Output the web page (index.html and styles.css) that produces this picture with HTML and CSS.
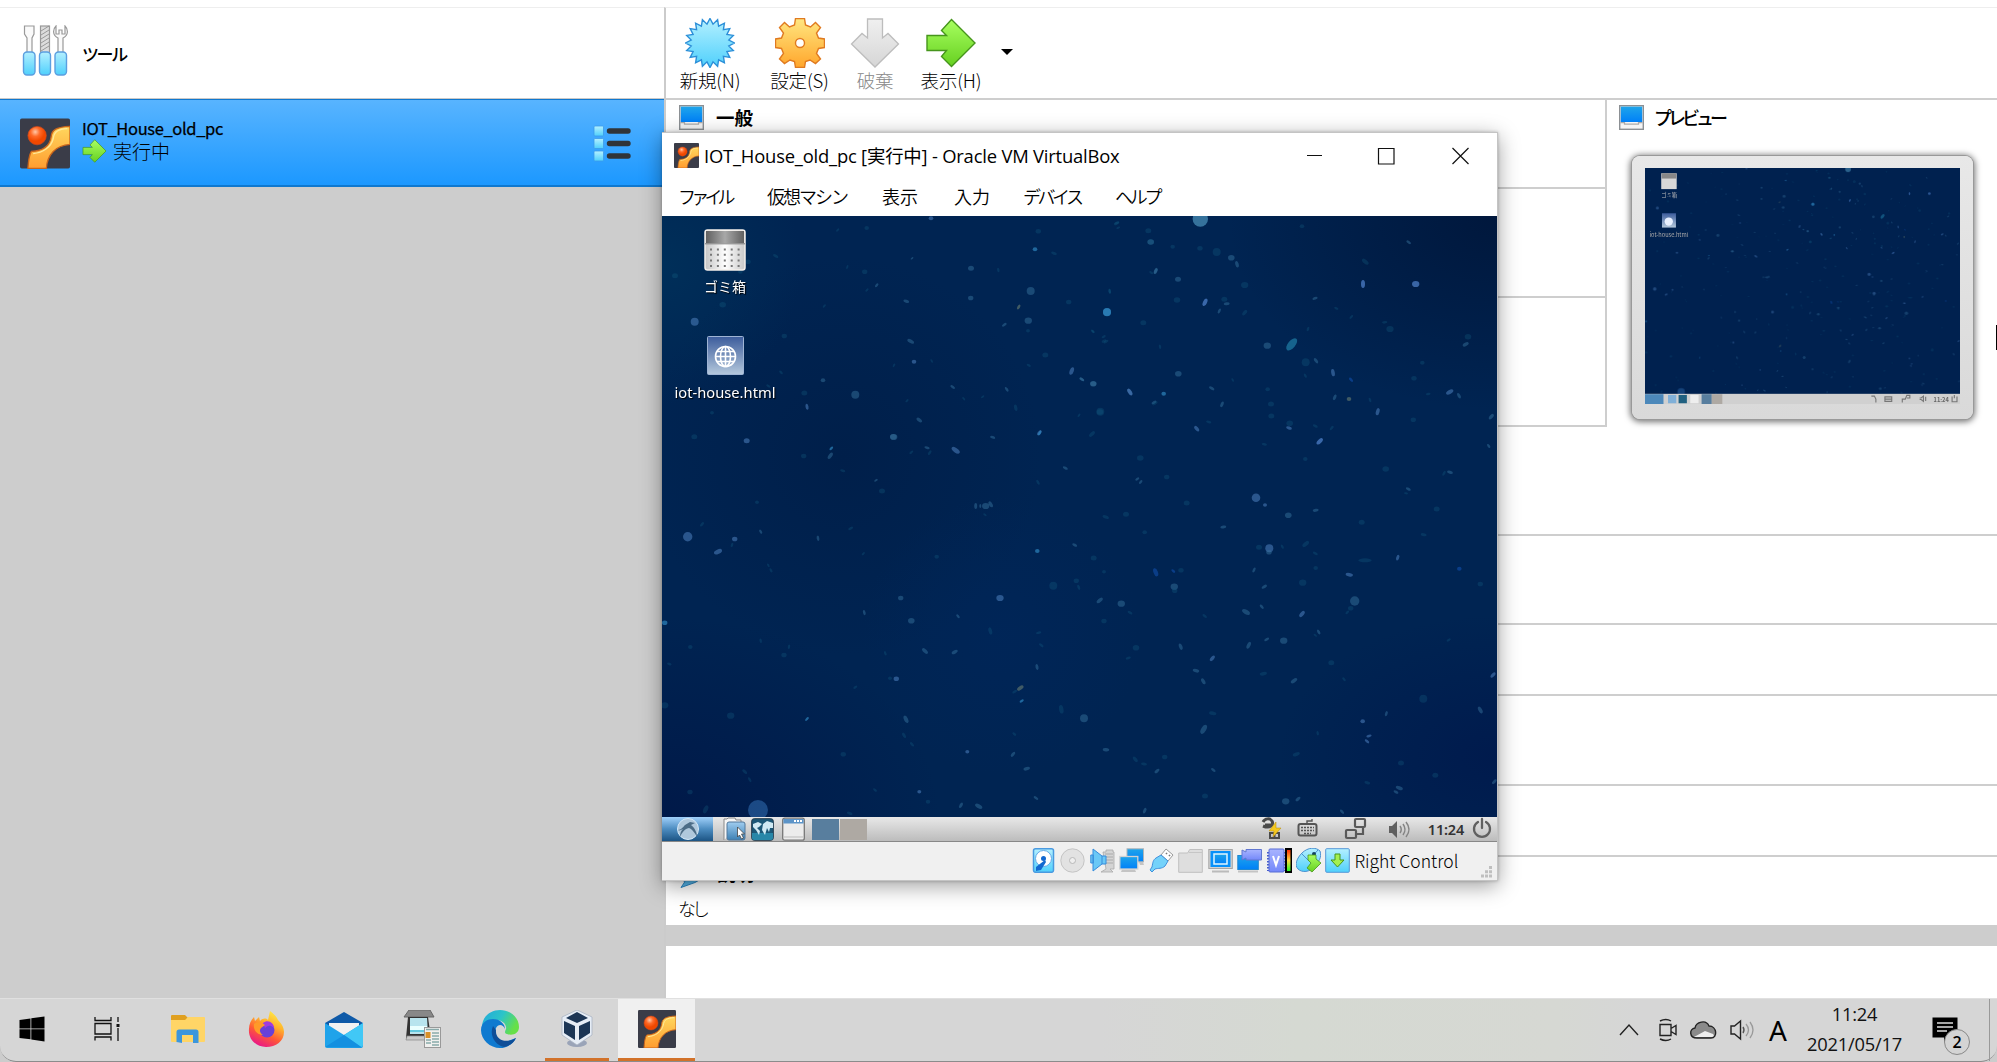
FILE: index.html
```html
<!DOCTYPE html>
<html lang="ja">
<head>
<meta charset="utf-8">
<title>Oracle VM VirtualBox</title>
<link rel="stylesheet" href="styles.css">
</head>
<body>
<svg class="defs" width="0" height="0" aria-hidden="true">
  <defs>
    <linearGradient id="gCyan" x2="0" y2="1"><stop offset="0" stop-color="#b4f0ff"/><stop offset="1" stop-color="#4fd0fc"/></linearGradient>
    <linearGradient id="gScreen" x2="0" y2="1"><stop offset="0" stop-color="#1fa5ea"/><stop offset="1" stop-color="#0080f8"/></linearGradient>
    <linearGradient id="gGreen" x2="0" y2="1"><stop offset="0" stop-color="#a8ff60"/><stop offset="1" stop-color="#66d020"/></linearGradient>
    <linearGradient id="gOrange" x2="0" y2="1"><stop offset="0" stop-color="#ffe680"/><stop offset="1" stop-color="#ffa62c"/></linearGradient>
    <linearGradient id="gGray" x2="0" y2="1"><stop offset="0" stop-color="#f0f0f0"/><stop offset="1" stop-color="#d6d6d6"/></linearGradient>
    <linearGradient id="gViolet" x2="0" y2="1"><stop offset="0" stop-color="#a8b4ff"/><stop offset="1" stop-color="#7488fa"/></linearGradient>
    <linearGradient id="gHouse" x2="0" y2="1"><stop offset="0" stop-color="#ffd75e"/><stop offset="1" stop-color="#ff9d30"/></linearGradient>
    <radialGradient id="gBall" cx=".4" cy=".3"><stop offset="0" stop-color="#ffc8a8"/><stop offset=".5" stop-color="#ff6a28"/><stop offset="1" stop-color="#f04800"/></radialGradient>
    <linearGradient id="gTrash"><stop offset="0" stop-color="#c4c4c4"/><stop offset=".5" stop-color="#fff"/><stop offset="1" stop-color="#c8c8c8"/></linearGradient>
    <linearGradient id="gLid"><stop offset="0" stop-color="#606060"/><stop offset=".5" stop-color="#a8a8a8"/><stop offset="1" stop-color="#606060"/></linearGradient>
    <linearGradient id="gPage" x2="0" y2="1"><stop offset="0" stop-color="#3c5c9c"/><stop offset="1" stop-color="#b4c8dc"/></linearGradient>
    <linearGradient id="gBlue" x2="0" y2="1"><stop offset="0" stop-color="#a0cdf0"/><stop offset="1" stop-color="#3c80b4"/></linearGradient>
    <linearGradient id="gFire" x1=".8" x2=".3" y2="1"><stop offset="0" stop-color="#fff14a"/><stop offset=".35" stop-color="#ffb42c"/><stop offset=".65" stop-color="#ff5a35"/><stop offset="1" stop-color="#e8148c"/></linearGradient>
    <linearGradient id="gEdge" x2="1" y2=".4"><stop offset="0" stop-color="#22a8dc"/><stop offset=".55" stop-color="#2cc4c8"/><stop offset="1" stop-color="#66e048"/></linearGradient>
    <linearGradient id="gMeter" x2="0" y2="1"><stop offset="0" stop-color="#ff2000"/><stop offset=".5" stop-color="#ffd840"/><stop offset="1" stop-color="#10ff20"/></linearGradient>
  </defs>
  <symbol id="house" viewBox="0 0 114 114">
    <rect width="114" height="114" rx="4" fill="#3a3c48"/>
    <circle cx="39" cy="39" r="21" fill="url(#gBall)" stroke="#d84818" stroke-width="1.5"/>
    <path d="M114 18C84 19 72 26 71 42C68 62 52 74 26 75C20 84 19 100 18 114H60C62 82 82 61 114 59Z" fill="url(#gHouse)" stroke="#c8641c" stroke-width="3"/>
    <path d="M108 23C88 24 78 29 76 45C71 66 52 78 30 80" fill="none" stroke="#ffe99a" stroke-width="3"/>
  </symbol>
  <symbol id="monitor" viewBox="0 0 25 25">
    <rect x=".7" y=".7" width="23.6" height="23.6" fill="#f4f4f4" stroke="#8c9094" stroke-width="1.4"/>
    <rect x="1.8" y="1.6" width="21.4" height="15.4" fill="url(#gScreen)"/>
    <path d="M1.5 17.6h4v1.6h14v-1.6h4" fill="none" stroke="#aaa" stroke-width="1.2"/>
  </symbol>
  <symbol id="arrow" viewBox="0 0 50 50">
    <path d="M1 17.5H20.500L15.500 12.500L25.500 1.500L49 25L25.500 48.500L15.500 38.500L20.500 32.500H1Z" fill="url(#gGreen)" stroke="#46951c" stroke-width="1.4"/>
  </symbol>
</svg>

<div class="manager">
  <aside class="side">
    <div class="tools">
      <svg class="tools-icon" viewBox="0 0 47 52">
        <g fill="#fafafa" stroke="#999" stroke-width="1.2">
          <path d="M2.500 1h9.500v8l-2 4v15H5V13L2.500 9Z"/><rect x="18.500" y="1" width="9" height="27" fill="#ddd"/>
          <path d="M34 1c-3 3-4 9 2 12v15h5V13c6-3 5-9 2-12v8h-3V5h-3v4h-3Z"/>
        </g>
        <path d="M19 6l8-5M19 10l8-5M19 14l8-5M19 18l8-5M19 22l8-5M19 26l8-5" stroke="#888" stroke-width=".8"/>
        <g fill="url(#gCyan)" stroke="#5b9fe0" stroke-width="1.4"><rect x="1.500" y="27" width="11.500" height="23" rx="3.500"/><rect x="17.500" y="27" width="11" height="23" rx="3.500"/><rect x="33" y="27" width="11.500" height="23" rx="3.500"/></g>
      </svg>
      <span class="tools-label">ツール</span>
    </div>
    <div class="machine">
      <svg class="machine-icon"><use href="#house"/></svg>
      <div class="machine-text">
        <div class="machine-name">IOT_House_old_pc</div>
        <div class="machine-state"><svg><use href="#arrow"/></svg><span>実行中</span></div>
      </div>
      <svg class="list-icon" viewBox="0 0 38 38">
        <g fill="url(#gCyan)" stroke="#3c9ae8" stroke-width=".8"><rect x="1" y="1" width="9.500" height="10" rx="1"/><rect x="1" y="13.500" width="9.500" height="10" rx="1"/><rect x="1" y="26" width="9.500" height="10" rx="1"/></g>
        <path d="M16.500 6h18.500M16.500 18.500h18.500M16.500 31h18.500" stroke="#303438" stroke-width="5.400" stroke-linecap="round"/>
      </svg>
    </div>
  </aside>

  <main class="content">
    <div class="toolbar">
      <div class="tool">
        <svg id="burst" viewBox="-25 -25 50 50"></svg><span>新規(N)</span>
      </div>
      <div class="tool">
        <svg viewBox="-25 -25 50 50"><path d="M-4.500-24.500H4.500L5.500-18L10.500-16L15.500-20.500L20.500-15.500L16.500-10L18.500-5L24.500-4V4.500L18.500 5.500L16.500 10.500L20.500 16L15.500 20.500L10 17L5.500 18.500L4.500 24.500H-4.500L-5.500 18.500L-10 17L-15.500 20.500L-20.500 16L-16.500 10.500L-18.500 5.500L-24.500 4.500V-4L-18.500-5L-16.500-10L-20.500-15.500L-15.500-20.500L-10.500-16L-5.500-18Z" fill="url(#gOrange)" stroke="#e07a20" stroke-width="1.400"/><circle r="4.500" fill="#fff" stroke="#e07a20" stroke-width="1.400"/></svg><span>設定(S)</span>
      </div>
      <div class="tool off">
        <svg viewBox="0 0 50 50"><path d="M17.500 1H32.500V20L38 15.500L48.500 26L25 49L1.500 26L12 15.500L17.500 20Z" fill="url(#gGray)" stroke="#bdbdbd" stroke-width="1.300"/></svg><span>破棄</span>
      </div>
      <div class="tool"><svg><use href="#arrow"/></svg><span>表示(H)</span></div>
      <i class="caret"></i>
    </div>
    <div class="details">
      <div class="top-row">
        <div class="sections">
          <section class="s-general"><svg class="sec-icon"><use href="#monitor"/></svg><b>一般</b></section>
          <section class="s-system"></section>
          <section class="s-display"></section>
        </div>
        <div class="preview">
          <div class="preview-head"><svg class="sec-icon"><use href="#monitor"/></svg><b>プレビュー</b></div>
          <div class="frame">
            <svg class="mini" viewBox="0 0 835 626" preserveAspectRatio="none">
              <rect width="835" height="601" fill="#00214f"/>
              <g class="specks"></g>
              <rect x="43" y="14" width="41" height="42" fill="#d8d8d8"/><rect x="44" y="14" width="39" height="14" fill="#888"/>
              <rect x="45" y="120" width="37" height="38" fill="url(#gPage)"/><circle cx="63" cy="142" r="11" fill="#e8f0ff"/>
              <text x="43" y="76" font-size="14" fill="#bbb">ゴミ箱</text><text x="12" y="182" font-size="15" fill="#aaa">iot-house.html</text>
              <rect y="599" width="835" height="27" fill="#d0d0d0"/><rect y="600" width="49" height="26" fill="#4c88ba"/><rect x="61" y="602" width="22" height="22" fill="#80b0d8"/><rect x="89" y="602" width="22" height="22" fill="#206080"/><rect x="120" y="602" width="22" height="22" fill="#eee"/><rect x="150" y="600" width="27" height="26" fill="#587e9e"/><rect x="177" y="600" width="28" height="26" fill="#aea9a3"/>
              <g fill="none" stroke="#777" stroke-width="3"><path d="M600 605h8l4 8v9M636 607h18v12h-18ZM636 613h18M682 622v-9h8l4-10h8v7h-8M728 610h4l6-5v14l-6-5h-4M744 607v11M814 606v14h13v-14M820 602v9"/></g><text x="765" y="620" font-size="15" font-weight="700" fill="#666">11:24</text>
            </svg>
          </div>
          <i class="edge-cursor"></i>
        </div>
      </div>
      <section class="r1"></section><section class="r2"></section><section class="r3"></section><section class="r4"></section><section class="r5"></section>
      <section class="r6">
        <div class="desc-head"><svg class="bubble" viewBox="0 0 25 25"><path d="M3 2h19v14l-5 3-14 5 4-6-4-2Z" fill="#58b8ec" stroke="#2c88c4"/></svg><b>説明</b></div>
        <p>なし</p>
      </section>
    </div>
    <div class="log"></div>
  </main>
</div>

<div class="vm">
  <header class="titlebar">
    <svg class="title-icon"><use href="#house"/></svg>
    <span class="title">IOT_House_old_pc [実行中] - Oracle VM VirtualBox</span>
    <svg class="controls" viewBox="0 0 164 18"><path d="M0 8.500h15M71.500 1.500h15.500v15.500H71.500ZM145.500 1l16 16M161.500 1l-16 16" fill="none" stroke="#111" stroke-width="1.200"/></svg>
  </header>
  <nav class="menu"><span>ファイル</span><span>仮想マシン</span><span>表示</span><span>入力</span><span>デバイス</span><span>ヘルプ</span></nav>
  <div class="desktop">
    <svg class="wall" viewBox="0 0 835 601"><g class="specks"></g></svg>
    <div class="shortcut trash">
      <svg viewBox="0 0 42 42" width="42" height="42"><rect x="1" y="1" width="40" height="40" rx="2.500" fill="url(#gTrash)" stroke="#f4f0ec" stroke-width="1.500"/><rect x="2" y="2" width="38" height="12" fill="url(#gLid)"/><path d="M1 14.800h40" stroke="#777"/><path d="M6 20.500h32M6 25.800h32M6 31.500h32M6 37h32" stroke="#777" stroke-width="2" stroke-dasharray="2 4.900"/></svg>
      <span>ゴミ箱</span>
    </div>
    <div class="shortcut page">
      <svg viewBox="0 0 37 39" width="37" height="39"><rect x=".5" y=".5" width="36" height="38" rx="1" fill="url(#gPage)" stroke="#9fb4d4"/><g fill="none" stroke="#fff" stroke-width="1.600"><circle cx="18.500" cy="20.500" r="10"/><ellipse cx="18.500" cy="20.500" rx="5" ry="10"/><path d="M18.500 10.500v20M8.500 20.500h20M10 15.500h17M10 25.500h17"/></g></svg>
      <span>iot-house.html</span>
    </div>
  </div>
  <div class="panel">
    <div class="start"><svg viewBox="0 0 24 24" width="24" height="24"><circle cx="12" cy="12" r="10.500" fill="#b0c8dc" stroke="#d4e8f8"/><path d="M2 13c3 0 5-3 7-5l5-3 5 1-4 2c4 3 6 8 6 12-2-4-5-8-8-9-5 1-7 5-9 9 0-4 1-6 3-8-2 1-4 2-5 1Z" fill="#4c6c86"/></svg></div>
    <div class="launch">
      <svg viewBox="0 0 23 24"><path d="M1 23V2h3l1-1h7l1 2h5v5" fill="#f6f6f6" stroke="#888"/><rect x="4" y="5" width="18" height="18" rx="2" fill="url(#gBlue)" stroke="#50779a"/><path d="M14.500 10v10l2-2 2 4 2-1-2-4h3Z" fill="#fff" stroke="#444" stroke-width=".8"/></svg>
      <svg viewBox="0 0 23 24"><rect x=".7" y="1.700" width="21.600" height="21.600" rx="2.500" fill="#1c5878" stroke="#20384a"/><path d="M1 16h21v5q0 2-2 2H3q-2 0-2-2Z" fill="#2887a8"/><path d="M2 7l5-2 4 2-3 3-2 1 3 3-1 4-3-5-3-3ZM12 7l4-3 6 2v5l-3 0-1 4-2-4-2 7-3-5Z" fill="#d0eaf4"/></svg>
      <svg viewBox="0 0 23 24"><rect x=".7" y="1.200" width="21.600" height="22" rx="2" fill="#ececec" stroke="#777" stroke-width="1.300"/><rect x="1.400" y="2" width="20.200" height="4.500" fill="#5c94c8"/><path d="M12 4h8" stroke="#fff" stroke-width="2" stroke-dasharray="2 1"/><path d="M2 20h19" stroke="#bbb"/></svg>
    </div>
    <div class="pager"><i></i><i></i></div>
    <svg class="tray" viewBox="0 0 236 24">
      <g fill="none" stroke="#4a4a4a" stroke-width="3"><path d="M2 9c7 3 11-1 9-5C9 1 4 1 2 5M11 8H4"/><path d="M9 16h9v5H9ZM13.500 15v6" stroke-width="2"/></g><path d="M15 5l-7 9h5l-1 6 8-9h-5Z" fill="#f4c820" stroke="#bb8c00" stroke-width=".5"/>
      <g fill="none" stroke="#555"><rect x="37.500" y="7" width="18" height="11.500" rx="2" stroke-width="2"/><path d="M40 10.500h13M40 13.500h13M43 16.500h7" stroke-width="1.700" stroke-dasharray="2 1"/><path d="M46 7V4h5V2" stroke-width="1.400"/></g>
      <g fill="none" stroke="#5a5a5a" stroke-width="2.200"><rect x="94" y="2" width="10" height="8" rx="1"/><rect x="85" y="13" width="10" height="8" rx="1"/><path d="M102 10v7h-7"/></g>
      <path d="M128 9h3l5-5v17l-5-5h-3Z" fill="#606060"/><path d="M139 9q2.500 3.500 0 7M142 7q4 5.500 0 11M145 5q6 7.500 0 15" fill="none" stroke="#858585" stroke-width="1.500"/>
      <g fill="none" stroke="#606060" stroke-width="2.300" stroke-linecap="round"><path d="M217 5a8 8 0 1 0 8 0M221 2v9"/></g>
    </svg>
    <span class="panel-clock">11:24</span>
  </div>
  <footer class="status">
    <div class="indicators">
      <svg viewBox="0 0 25 25"><rect x="2.500" y=".8" width="20" height="23.500" rx="2" fill="url(#gCyan)" stroke="#4a9ae0" stroke-width="1.500"/><circle cx="12.500" cy="10.500" r="8" fill="#fff" stroke="#65a9e8"/><circle cx="12.500" cy="10.500" r="2.500" fill="#1268d0"/><path d="M14 12l-9 7v4l5-1 5-8Z" fill="#1268d0"/></svg>
      <svg viewBox="0 0 25 25"><circle cx="12.500" cy="12.500" r="11.700" fill="#e2e2e2" stroke="#c4c4c4"/><circle cx="12.500" cy="12.500" r="3" fill="#eee" stroke="#b8b8b8"/></svg>
      <svg viewBox="0 0 25 25"><path d="M13 4h3V2h7v2h1v17h-4l3 3H11l5-3Z" fill="#d4d4d4" stroke="#aaa" stroke-width=".8"/><path d="M15 6h8M15 9h8M15 12h8M15 15h8" stroke="#aaa"/><path d="M.8 7h2.500v8H.8ZM3 1l9 7h4v8h-4l-9 7Z" fill="#6ac8f6" stroke="#368cdc"/><path d="M12 8v8" stroke="#368cdc"/></svg>
      <svg viewBox="0 0 25 25"><rect x="8" y=".8" width="16.500" height="13" fill="url(#gScreen)" stroke="#aeb4b8"/><path d="M21 17h4l-1-3h-4ZM2 24h15l-1-2.500H3Z" fill="#c4c4c4"/><rect x=".8" y="8.500" width="18" height="12.500" fill="url(#gScreen)" stroke="#d2d2d2" stroke-width="1.300"/></svg>
      <svg viewBox="0 0 25 25"><path d="M17 1l7 6-5 6-7-6Z" fill="#fff" stroke="#999"/><path d="M17 5l1 1M20 7l1 1" stroke="#777" stroke-width="1.700"/><path d="M12 7l7 6-3 5c-3 3-7 2-10 3l-3 3-2-2 2-3c1-5 1-7 4-9Z" fill="#74d2fa" stroke="#4090dc"/></svg>
      <svg viewBox="0 0 25 25"><path d="M.7 5h9l2-3.500h12.600v22.800H.7Z" fill="#dedede" stroke="#c0c0c0"/><path d="M11 4.500h13" stroke="#c6c6c6"/></svg>
      <svg viewBox="0 0 25 25"><rect x=".8" y="1.500" width="23.500" height="19" fill="#d2d2d2" stroke="#a6a6a6"/><rect x="2.500" y="3" width="20" height="16" fill="#0891fa"/><rect x="6" y="6" width="13" height="10" fill="url(#gScreen)" stroke="#dff6ff" stroke-width="1.500"/><path d="M4 24.500h17v-2H4Z" fill="#bbb"/></svg>
      <svg viewBox="0 0 25 25"><rect x=".8" y="7.500" width="20.500" height="14" fill="url(#gScreen)" stroke="#2088d0"/><path d="M1 24.500h20v-2H1Z" fill="#c4c4c4"/><path d="M9 1.500h15.500v10.500H9V10l-4 2V2l4 2Z" fill="url(#gViolet)" stroke="#6076d0"/></svg>
      <svg viewBox="0 0 25 25"><path d="M1 4v19M17.500 4v19" stroke="#445acc" stroke-width="2" stroke-dasharray="1.500 1.500"/><rect x="2" y="1" width="15" height="23" rx="1" fill="url(#gViolet)" stroke="#586cd4"/><path d="M6 8l3 9 3-9" fill="none" stroke="#fff" stroke-width="2"/><rect x="19" y="1" width="5.500" height="23" fill="url(#gMeter)" stroke="#000" stroke-width="2"/></svg>
      <svg viewBox="0 0 25 25"><path d="M6 5C12-1 20-1 24 3c2 6-1 11-6 16-4 5-12 6-16 2S1 10 6 5Z" fill="url(#gCyan)" stroke="#4a90d0"/><path d="M5 5l8 8M12 13L22 2" stroke="#4a90d0" fill="none"/><circle cx="18" cy="6" r="2" fill="#104060"/><path d="M12 7h8v4l5 4-9 9-5-4 4-5-3-3Z" fill="url(#gGreen)" stroke="#46951c" stroke-width=".8"/></svg>
      <svg viewBox="0 0 25 25"><rect x=".7" y=".7" width="23.600" height="23.600" rx="1" fill="url(#gCyan)" stroke="#5698d8"/><path d="M10 6h5v6h4l-6.500 7L6 12h4Z" fill="#a4f050" stroke="#46951c"/></svg>
    </div>
    <span class="host-key">Right Control</span>
    <svg class="grip" viewBox="0 0 12 12"><path d="M8 0h3v3H8ZM4 4.300h3v3H4ZM8 4.300h3v3H8ZM0 8.600h3v3H0ZM4 8.600h3v3H4ZM8 8.600h3v3H8Z" fill="#bfbfbf"/></svg>
  </footer>
</div>

<div class="taskbar">
  <div class="tb win"><svg viewBox="0 0 26 26" width="26" height="26"><path d="M.5 4l11-1.500v10H.500ZM12.300 2.200L25.500.500v12H12.300ZM.500 13.300h11v10L.500 22ZM12.300 13.300H25.500v12.200L12.300 23.500Z"/></svg></div>
  <div class="tb view"><svg viewBox="0 0 26 26" width="26" height="26" fill="none" stroke="#111" stroke-width="1.300"><path d="M1 1v3.500h16V1M1 7.500h16v10.500H1ZM1 24.500v-3.500h16v3.500M24 1v5M24 12v13"/><path d="M22.500 8h3v3h-3Z" fill="#111" stroke="none"/></svg></div>
  <div class="tb app"><svg viewBox="0 0 34 28" width="34" height="28"><path d="M0 1q0-1 1-1h13l3 3-3 3H0Z" fill="#e0a020"/><path d="M0 5h14l3-3h16q1 0 1 1v23q0 1-1 1H1q-1 0-1-1Z" fill="#ffd566"/><path d="M5.500 27V17q0-2.500 2.500-2.500h17q2.500 0 2.500 2.500v11h-5.500v-8h-11v8Z" fill="#3c96dc"/></svg></div>
  <div class="tb app"><svg viewBox="0 0 36 36" width="36" height="36"><path d="M18 36C8 36 0 28 1 18c0-5 2-9 5-12l1 4 4-4 1 4c3-3 6-3 8-1l2-9c4 3 6 5 8 9 3 3 6 7 6 12 0 9-8 15-18 15Z" fill="url(#gFire)"/><circle cx="19" cy="19" r="7.500" fill="#6840d8"/><path d="M15 12c5-4 11 0 11 5-4-4-7-2-9 0Z" fill="#a03ce0"/><path d="M6 13c3-3 8-2 11 1l-4 3c-2 2-1 5 2 7-6 0-10-5-9-11Z" fill="#ff9a28"/></svg></div>
  <div class="tb app mail"><svg viewBox="0 0 38 36" width="38" height="36"><path d="M0 11L19 0l19 11v6H0Z" fill="#0f5aa8"/><path d="M4 11h30v10L19 26 4 21Z" fill="#f2f2f2"/><path d="M0 11l19 12L38 11v23q0 2-2 2H2q-2 0-2-2Z" fill="#1fa3ea"/><path d="M38 11L19 23l17 12q2 0 2-2Z" fill="#41c8f6"/><path d="M0 35L19 23l18 12.500Z" fill="#1390e0"/></svg></div>
  <div class="tb app"><svg viewBox="0 0 38 38" width="38" height="38"><path d="M6 0h21l4 7H1Z" fill="#888" stroke="#666"/><path d="M5 7h20l3 21-5 2H7l-4-2Z" fill="#333"/><path d="M7 8h17l1 16H7Z" fill="#b8e4ee"/><path d="M7 16h17v4H7Z" fill="#eaffff"/><path d="M7 21h17" stroke="#48c0d8" stroke-width="1.500"/><path d="M4 26h22l2 4H3Z" fill="#c8c8c8" stroke="#888" stroke-width=".7"/><rect x="21.500" y="17.500" width="16" height="20" fill="#f0f0ee" stroke="#999"/><rect x="22.500" y="22" width="5" height="6" fill="#d89028"/><path d="M23 19.500h13M29 23h7M29 26h7M23 30h5M29 29h7M23 33h5M29 32h7M29 35h7" stroke="#8aa" stroke-width="1.300"/></svg></div>
  <div class="tb app"><svg viewBox="0 0 38 38" width="38" height="38"><path d="M1 17C1 7 9 0 19 0c11 0 19 8 19 17 0 7-7 9-12 7-3-1-2-3-1-5 1-5-4-9-10-9C8 9 3 12 1 17Z" fill="url(#gEdge)"/><path d="M0 20c0-8 7-11 12-11 7 0 12 5 12 10-2-5-7-5-9-1-3 7 4 15 12 13l8-3c-3 6-9 10-16 10C9 38 0 30 0 20Z" fill="#0f7ad0"/><path d="M12 16c-4 9 2 19 11 21 5-1 10-4 12-9-10 6-21 2-20-8Z" fill="#0e4e98"/></svg></div>
  <div class="tb app open"><svg viewBox="0 0 34 38" width="34" height="38"><ellipse cx="17" cy="33" rx="10" ry="4" fill="#9aa4b8"/><path d="M17 0L32 7v18L17 35 2 25V7Z" fill="#e6edf6" stroke="#aab4c4" stroke-width=".8"/><path d="M17 2l11 6-11 5L6 8ZM4 11l11 5v14L4 23ZM30 11l-11 5v14l11-7Z" fill="#1c3656"/></svg></div>
  <div class="tb app active"><svg width="38" height="38"><use href="#house"/></svg></div>
  <div class="spacer"></div>
  <svg class="sys" viewBox="0 0 137 26">
    <g fill="none" stroke="#222" stroke-width="1.400">
      <path d="M2 18l9-10 9 10"/>
      <path d="M42 7.500h11v11H42ZM53 11.500l5-3v9l-5-3M42 4q6-3 11 0M42 22q6 3 11 0"/>
      <path d="M113 9h3.500l6-5v18l-6-5H113Z"/>
    </g>
    <path d="M79 21c-8 0-8-9-2-10 1-6 11-9 14-2 8 0 9 12 2 12Z" fill="#8a8a8a" stroke="#222" stroke-width="1.400"/><path d="M76 20l11-6 8 3q2 2-1 3Z" fill="#eee"/>
    <path d="M125 10q2 3 0 6" fill="none" stroke="#555" stroke-width="1.400"/><path d="M128 7q5 6 0 12M132 5q6 8 0 16" fill="none" stroke="#999" stroke-width="1.300"/>
  </svg>
  <span class="ime">A</span>
  <div class="clock"><span>11:24</span><span>2021/05/17</span></div>
  <div class="notice"><svg viewBox="0 0 26 26" width="26" height="26"><path d="M.500.500h25v20H16l-4 5v-5H.500Z"/><path d="M5 6h16M5 10h16M5 14h10" stroke="#ddd" stroke-width="1.300"/></svg><span class="badge">2</span></div>
  <i class="peek"></i>
</div>
<script src="wallpaper.js"></script>
</body>
</html>
```
FILE: styles.css
```css
* { box-sizing: border-box; }
body { margin: 0; width: 1997px; height: 1062px; overflow: hidden; position: relative; background: #fff; color: #000; font-family: "Noto Sans CJK JP", sans-serif; }
svg { display: block; flex: none; }
.defs { position: absolute; }
.wall, .mini { overflow: hidden; }

.manager { display: flex; height: 998px; padding-top: 7px; }
.side { width: 664px; background: #cdcdcd; border-top: 1px solid #eee; }
.tools { display: flex; align-items: center; height: 91px; background: #fff; border-bottom: 1px solid #c9c9c9; padding: 0 0 3px 22px; }
.tools-icon { width: 47px; height: 52px; margin-top: -1px; }
.tools-label { margin: 4px 0 0 13px; font-size: 17px; line-height: 24px; font-weight: 500; letter-spacing: -2.400px; }
.machine { display: flex; height: 88px; padding: 18px 33px 0 20px; background: linear-gradient(#58b4ff, #1c98ff); border: solid #0f78cf; border-width: 1px 0 2px; }
.machine-icon { width: 50px; height: 51px; }
.machine-text { margin-left: 12px; flex: 1; }
.machine-name { font: 400 16.500px/20px "Noto Sans CJK JP", sans-serif; height: 20px; letter-spacing: -.35px; white-space: nowrap; -webkit-text-stroke: .25px #000; }
.machine-state { display: flex; align-items: center; gap: 6px; height: 26px; font-size: 19px; font-weight: 300; line-height: 26px; }
.machine-state svg { width: 25px; height: 24px; }
.list-icon { width: 38px; height: 38px; margin-top: 7px; }

.content { flex: 1; min-width: 0; display: flex; flex-direction: column; border-top: 1px solid #eee; border-left: 2px solid #cbcbcb; }
.toolbar { display: grid; grid-template-columns: 88px 91px 60px 92px 20px; height: 92px; border-bottom: 2px solid #cecece; padding-top: 10px; }
.tool { display: flex; flex-direction: column; align-items: center; font-size: 18.500px; line-height: 24px; font-weight: 300; white-space: nowrap; letter-spacing: -.2px; }
.tool svg { width: 50px; height: 50px; }
.tool.off { color: #888; }
.caret { align-self: start; justify-self: center; margin-top: 31px; border: 6px solid transparent; border-top: 6px solid #000; border-bottom: 0; }
.details { height: 825px; }
.top-row { display: flex; height: 327px; }
.sections { width: 941px; border-right: 2px solid #cecece; }
.details section { border-bottom: 2px solid #cecece; }
.details .s-general { height: 89px; display: flex; padding: 5px 13px; gap: 12px; }
.s-general b, .desc-head b { font-size: 18.500px; line-height: 24px; font-weight: 700; }
.s-system { height: 109px; }
.s-display { height: 129px; }
.sec-icon { width: 25px; height: 25px; }
.preview { flex: 1; position: relative; }
.preview-head { display: flex; gap: 10px; padding: 5px 12px 0; height: 56px; }
.preview-head b { font-size: 18px; line-height: 25px; font-weight: 500; letter-spacing: -4px; }
.frame { margin-left: 25px; width: 341px; height: 263px; padding: 12px 13px; border-radius: 8px; background: linear-gradient(#e8e8e8, #d9d9d9); box-shadow: 0 0 0 1px #999, 0 1px 6px 2px #777; }
.mini { width: 315px; height: 236px; filter: blur(.5px); }
.edge-cursor { position: absolute; right: 0; top: 225px; width: 1px; height: 25px; background: #000; }
.r1 { height: 109px; } .r2 { height: 89px; } .r3 { height: 71px; } .r4 { height: 90px; } .r5 { height: 71px; }
.details .r6 { height: 68px; border: 0; padding: 5px 12px; }
.desc-head { display: flex; gap: 14px; height: 29px; }
.desc-head b { line-height: 23px; }
.bubble { width: 25px; height: 28px; }
.r6 p { margin: 5px 0 0; font-size: 18px; line-height: 24px; font-weight: 300; letter-spacing: -4px; }
.log { flex: 1; background: #fff; border-top: 21px solid #cdcdcd; }

.vm { position: absolute; left: 662px; top: 132px; width: 836px; height: 749px; display: flex; flex-direction: column; background: #fff; border: 1px solid #c4c4c4; border-width: 1px 1px 1px 0; box-shadow: 0 5px 20px rgba(0,0,0,.38), 0 0 3px rgba(0,0,0,.25); }
.titlebar { display: flex; align-items: center; height: 47px; padding: 0 26px 0 12px; }
.title-icon { width: 25px; height: 25px; margin-top: -2px; }
.title { margin: -2px 0 0 5px; flex: 1; font: 18.400px/28px "Open Sans", "Noto Sans CJK JP", sans-serif; letter-spacing: -.2px; white-space: nowrap; }
.controls { width: 164px; height: 18px; margin-top: -2px; }
.menu { display: flex; height: 36px; padding-left: 16px; font-size: 18px; line-height: 32px; font-weight: 350; white-space: nowrap; }
.menu span:nth-child(1) { width: 89px; letter-spacing: -4.800px; }
.menu span:nth-child(2) { width: 115px; letter-spacing: -2px; }
.menu span:nth-child(3) { width: 72px; }
.menu span:nth-child(4) { width: 69px; }
.menu span:nth-child(5) { width: 92px; letter-spacing: -3.500px; }
.menu span:nth-child(6) { letter-spacing: -3.300px; }

.desktop { position: relative; height: 601px; overflow: hidden; background: radial-gradient(circle at 0 8%, rgba(0,64,100,.4), transparent 140px), radial-gradient(ellipse at 100% 0, rgba(0,22,58,.9), transparent 270px), radial-gradient(ellipse at 100% 90%, rgba(0,24,76,.8), transparent 220px), radial-gradient(ellipse at 0 100%, rgba(0,22,70,.8), transparent 280px), radial-gradient(circle at 340px 420px, rgba(0,38,90,.7), transparent 140px), radial-gradient(circle at 180px 240px, #001f4a, transparent 200px), #002452; }
.wall { position: absolute; inset: 0; width: 835px; height: 601px; }
.wall .specks { opacity: .78; filter: blur(.6px); }
.mini .specks { opacity: .6; }
.shortcut { position: absolute; left: 2px; width: 122px; display: flex; flex-direction: column; align-items: center; color: #fff; text-shadow: 1px 1px 1px #000; white-space: nowrap; }
.trash { top: 13px; font-size: 14px; line-height: 20px; gap: 5px; }
.page { top: 120px; font: 14.700px/20px "Noto Sans", sans-serif; gap: 7px; }
.panel { display: grid; grid-template-columns: 51px 92px 1fr 236px; height: 25px; position: relative; background: linear-gradient(#e8e8e8, #bcbcbc); border-bottom: 1px solid #888; }
.start { display: grid; place-items: center; background: linear-gradient(#a0d0fa, #4c8cc0 50%, #1c5484); }
.launch { display: flex; padding-left: 10px; }
.launch svg { width: 23px; height: 24px; }
.launch svg + svg { margin-left: 5px; }
.launch svg:last-child { margin-left: 8px; }
.pager { display: flex; gap: 1px; padding: 2px 0 1px 7px; }
.pager i { width: 27px; background: #587e9e; }
.pager i + i { background: #aea9a3; }
.tray { width: 236px; height: 24px; }
.panel-clock { position: absolute; right: 33px; top: 2px; font: 600 14.500px/20px "Noto Sans", sans-serif; color: #333; letter-spacing: -.2px; }
.status { flex: 1; display: flex; align-items: flex-start; padding: 6px 4px 0 369px; background: #f0f0f0; position: relative; }
.indicators { display: flex; gap: 4.450px; }
.indicators svg { width: 25px; height: 25px; }
.host-key { margin-left: 4px; flex: 1; font-size: 17.500px; line-height: 26px; font-weight: 300; letter-spacing: 0; white-space: nowrap; }
.grip { width: 12px; height: 12px; margin-top: 18px; }

.taskbar { display: flex; height: 64px; background: linear-gradient(90deg, #d6d6d6 55%, #d5d9d2 65%, #d6d8d3 78%, #d6d6d6 82%); border-top: 1px solid #e0e0e0; border-bottom: 1px solid #8c8c8c; border-radius: 0 0 16px 16px; box-shadow: 0 0 0 16px #ccc; clip-path: inset(0); }
.tb { display: grid; place-items: center; padding-bottom: 2px; position: relative; height: 62px; }
.win { width: 64px; }
.view { width: 85px; }
.app { width: 78px; }
.open { border-bottom: 3px solid #d2722a; width: 64px; margin: 0 7px 0 6px; padding-bottom: 0; }
.mail svg { margin-top: 2px; }
.active { background: #f0f0f0; border-bottom: 3px solid #d2722a; padding-bottom: 0; margin-left: 2px; width: 77px; }
.spacer { flex: 1; }
.sys { width: 137px; height: 26px; margin: 18px 7px 0 0; }
.ime { width: 32px; text-align: center; font: 28px/62px "Noto Sans", sans-serif; }
.clock { width: 121px; display: flex; flex-direction: column; align-items: center; font: 18.300px/30px "Open Sans", sans-serif; letter-spacing: -.2px; color: #111; margin-right: 1px; }
.notice { position: relative; width: 73px; padding: 18px 0 0 16px; }
.badge { position: absolute; left: 28px; top: 30px; width: 26px; height: 26px; border: 1px solid #888; border-radius: 50%; background: #d4d4d4; text-align: center; font: 600 16px/24px "Open Sans", sans-serif; }
.peek { width: 8px; border-left: 1px solid #999; }
```
FILE: wallpaper.js
```js
// Floating particles: each patch has an origin and a list of x, y, size, tilt (deg), tone.
var patches = [
  { at: [-2, -16], dots: [
    [104,365,12,0,3],[264,185,8,0,1],[188,314,10,0,1],[241,215,7,0,1],[533,90,6,-45,1],[347,168,9,30,1],[562,201,6,-70,1],[614,215,8,0,1],[621,270,6,-45,1],[650,256,7,-50,2],[493,318,6,-45,1],[373,408,8,0,1],[739,304,9,15,2],[756,175,5,-40,2],[933,205,9,0,2],[932,294,8,0,2],[1125,148,7,0,4],[1182,160,9,20,1],[1112,273,12,0,2],[1076,321,8,-60,5],[1105,362,11,0,2],[1104,392,6,0,1],[1033,374,8,-35,2],[1135,94,8,0,1],[1349,274,7,80,1],[1341,337,12,0,4],[1226,306,8,0,1],[1472,126,10,0,2],[1487,213,9,-60,2],[1370,70,9,-30,1],[813,55,7,0,3],[752,424,11,30,2],[762,485,7,0,3],[702,496,6,-60,1],[815,483,6,60,1],[489,541,7,0,2],[586,584,12,0,2],[433,579,9,0,1],[441,620,9,80,3],[363,517,7,45,1],[325,558,7,30,1],[778,660,10,40,2],[741,602,6,-45,1],[878,561,8,35,2],[968,590,6,-40,1],[911,596,6,50,1],[1040,568,8,55,2],[1067,623,10,80,1],[1106,496,7,30,1],[1156,465,9,0,1],[1235,513,12,-70,3],[1265,538,8,30,2],[1300,551,9,0,2],[1298,394,7,45,1],[1332,423,8,-30,1],[1410,576,11,60,3],[1320,636,10,0,1],[1138,698,9,-50,3],[1482,607,8,-30,2],[700,710,10,0,2],[620,84,7,0,1],[45,227,9,0,1],[156,638,6,0,1],[1015,210,7,80,1],[1257,646,6,-50,1]] },
  { at: [0, 214], dots: [
    [97,20,9,0,1],[254,32,9,0,3],[505,77,11,-55,2],[508,55,7,-45,4],[425,78,8,0,1],[695,21,11,0,2],[881,61,14,35,3],[795,53,8,15,2],[803,68,8,-55,1],[748,67,7,-40,1],[992,22,8,20,2],[1133,9,8,-60,4],[1210,114,8,25,2],[1128,157,8,60,1],[542,122,8,15,1],[642,151,6,-35,2],[660,183,9,0,1],[941,228,9,90,2],[955,228,6,90,2],[971,228,11,0,2],[986,223,10,60,2],[969,254,6,40,1],[77,320,14,0,3],[218,327,8,0,3],[210,345,7,-70,1],[168,365,13,-25,3],[120,283,8,-50,1],[285,217,6,0,1],[296,305,7,60,2],[468,325,8,80,2],[566,295,8,-30,1],[319,406,6,60,1],[327,421,7,60,1],[604,371,6,-45,1],[824,380,7,0,1],[716,504,8,0,2],[607,548,8,75,2],[748,572,10,0,2],[888,559,7,50,2],[1014,504,11,0,3],[1126,363,7,0,4],[1174,467,12,0,1],[1238,345,8,30,2],[1243,452,8,0,1],[1250,472,8,70,1],[985,603,11,75,1],[878,666,10,-30,2],[789,663,11,45,2],[670,670,7,70,1],[1130,608,8,-10,1],[1138,646,8,40,1],[1125,711,9,80,2],[703,746,8,0,3],[684,745,6,0,1],[580,772,7,-35,1],[1075,774,11,-35,5],[1058,785,8,-30,1],[1079,813,7,-30,4],[732,868,12,65,2],[726,916,9,60,1],[750,943,8,45,1],[544,973,8,0,1],[435,867,7,-45,4],[206,857,11,0,1],[8,578,8,0,4],[8,826,11,0,1],[381,650,7,-80,1],[366,675,8,0,1],[296,632,7,80,1],[85,651,7,0,1],[22,702,7,20,1],[248,1025,9,40,1],[263,1049,8,60,1],[288,1140,30,0,6],[131,1138,13,-65,1],[639,1080,7,40,1],[772,1085,6,0,3],[798,1115,7,0,1],[897,1126,9,-60,2],[950,1129,12,30,2],[916,965,6,0,3],[1053,973,9,-50,2],[1094,1016,10,-15,2],[1122,1104,8,35,2],[1057,912,7,40,1],[84,1086,8,0,1],[563,1150,9,20,1],[1198,838,13,80,1]] },
  { at: [418, 214], dots: [
    [36,12,11,-45,1],[181,84,10,0,1],[172,147,7,-35,2],[182,156,7,-50,2],[260,141,8,0,1],[528,203,13,0,3],[555,225,6,0,3],[625,256,10,0,2],[707,241,9,-10,2],[719,34,12,-45,7],[553,43,8,10,1],[676,87,7,0,1],[917,117,10,0,1],[1110,127,9,15,2],[1092,130,8,-60,1],[985,177,8,30,2],[978,190,6,10,1],[1070,237,9,0,1],[1226,48,7,55,2],[845,277,9,0,1],[1031,314,9,10,1],[855,391,20,0,1],[953,383,9,-70,3],[1138,416,7,0,8],[430,291,9,-10,2],[568,355,12,0,3],[567,367,8,0,2],[537,352,9,0,1],[607,350,7,60,1],[677,342,12,-40,1],[706,370,8,30,1],[808,434,11,10,3],[824,513,14,0,2],[812,535,8,0,1],[802,547,7,-45,1],[666,552,11,-50,3],[553,470,9,-30,2],[545,530,8,50,2],[522,420,8,-65,2],[498,546,13,30,2],[283,470,11,0,2],[284,482,8,0,1],[280,423,7,40,8],[303,421,8,0,1],[227,427,13,70,8],[59,511,11,-40,2],[124,521,11,0,2],[72,573,8,0,1],[41,384,9,0,1],[77,261,10,20,1],[138,253,9,0,1],[320,219,9,0,1],[194,307,7,0,1],[374,558,8,40,1],[611,632,11,0,2],[560,628,8,-30,2],[506,646,11,-65,2],[302,650,10,70,2],[397,685,10,-50,3],[348,722,10,15,2],[370,754,10,60,2],[550,731,11,-10,1],[642,752,11,-35,2],[716,606,8,60,2],[706,616,6,40,1],[754,698,9,0,1],[792,748,7,50,1],[12,865,12,0,2],[371,898,15,-60,2],[78,959,10,5,2],[231,1023,9,-40,2],[192,1002,9,10,1],[254,981,8,0,1],[400,1020,8,40,2],[617,1114,11,0,2],[654,1107,9,-40,2],[848,874,7,0,3],[867,918,8,-15,3],[861,934,8,40,3],[919,851,8,-70,2],[963,999,9,0,1],[1201,840,11,60,2],[1239,735,10,-50,3],[958,1074,11,20,2],[948,1086,8,30,2],[862,1058,9,15,1],[786,1145,8,45,2],[1066,1036,9,0,1],[1243,1055,9,-45,2],[1030,806,12,0,1],[194,1142,9,-65,2],[375,1098,9,0,1],[649,973,11,-20,1],[1201,462,8,0,1],[1106,630,7,-30,1],[72,425,6,0,1],[150,548,8,30,1],[168,653,10,0,1],[145,684,8,-20,1],[707,414,7,0,1],[668,458,11,0,1],[166,988,10,50,1],[398,850,11,10,1],[713,910,7,80,1]] },
  { at: [418, -6], dots: [
    [361,27,23,0,9],[212,96,10,0,1],[110,39,8,-20,1],[115,53,6,-20,1],[360,115,8,0,1],[410,126,12,0,1],[454,143,10,0,2],[471,163,10,75,2],[227,183,10,-70,2],[214,188,7,30,1],[294,208,9,0,2],[291,270,10,0,1],[375,277,12,-65,7],[418,303,8,-65,2],[440,281,9,-5,2],[433,268,9,0,1],[494,225,11,0,1],[494,308,10,-50,1],[89,244,8,80,1],[81,306,12,0,4],[39,364,6,45,1],[71,380,7,-30,1],[78,395,8,-30,1],[190,338,9,0,1],[240,410,7,80,1],[705,265,8,-20,2],[666,49,7,0,1],[849,222,12,90,7],[1007,222,11,0,7],[986,97,8,35,2],[814,321,7,-45,1],[769,295,7,25,1],[684,357,7,-70,1],[914,337,8,-5,1],[930,357,11,0,1],[635,403,22,-50,10],[562,407,11,0,2],[708,452,9,55,2],[759,488,11,80,3],[677,457,12,0,1],[813,509,8,50,8],[764,562,9,-65,2],[807,567,7,0,5],[893,605,11,-75,3],[870,570,7,70,1],[1157,403,10,-30,2],[1109,546,12,-30,3],[1137,557,9,60,2],[1234,620,10,-50,2],[1002,505,8,0,1],[1000,629,8,0,1],[1027,458,7,0,1],[295,491,10,0,2],[251,551,7,0,4],[149,546,11,55,3],[40,521,10,0,2],[6,508,8,35,2],[61,605,12,0,1],[426,583,9,-65,2],[350,656,10,50,3],[629,640,10,0,1],[627,654,9,20,3],[395,535,9,30,2],[225,580,9,-30,1],[458,510,6,60,1],[563,538,7,0,1],[573,582,9,0,1],[574,618,9,0,1],[676,497,7,60,1],[706,648,8,30,1],[1045,552,7,-10,1],[386,636,8,15,1],[755,654,8,-50,1],[1164,380,10,0,1],[205,62,9,0,1],[278,110,7,0,1],[856,155,12,40,1]] }
];
var tones = { 1: ["#1c7494", .3], 2: ["#4486b0", .5], 3: ["#5488c8", .65], 4: ["#3aa0dc", .7], 5: ["#8a9a78", .6], 6: ["#2c66a8", .8], 7: ["#5c92e0", .8], 8: ["#1860d0", .55], 9: ["#4d96be", .9], 10: ["#2a9ac0", .7] };
var markup = "";
patches.forEach(function (p) {
  p.dots.forEach(function (d) {
    var x = p.at[0] + d[0] / 3, y = p.at[1] + d[1] / 3, r = d[2] / 3;
    var flat = d[3] === 0 ? .85 : .5, tone = tones[d[4]];
    if (d[2] > 11 && d[3] === 0) flat = d[2] === 20 ? .3 : 1;
    markup += '<ellipse cx="' + x.toFixed(1) + '" cy="' + y.toFixed(1) + '" rx="' + r.toFixed(1) + '" ry="' + (r * flat).toFixed(1) +
      '" transform="rotate(' + d[3] + " " + x.toFixed(1) + " " + y.toFixed(1) + ')" fill="' + tone[0] + '" opacity="' + tone[1] + '"/>';
  });
});
document.querySelectorAll(".specks").forEach(function (g) { g.innerHTML = markup; });

// Twenty-point burst of the "new machine" icon.
var points = [];
for (var i = 0; i < 40; i++) {
  var a = Math.PI * i / 20 - Math.PI / 2, rad = i % 2 ? 19 : 24.5;
  points.push((rad * Math.cos(a)).toFixed(1) + "," + (rad * Math.sin(a)).toFixed(1));
}
document.getElementById("burst").innerHTML = '<polygon points="' + points.join(" ") + '" fill="url(#gCyan)" stroke="#2c8fd8" stroke-width="1.4"/>';
```
